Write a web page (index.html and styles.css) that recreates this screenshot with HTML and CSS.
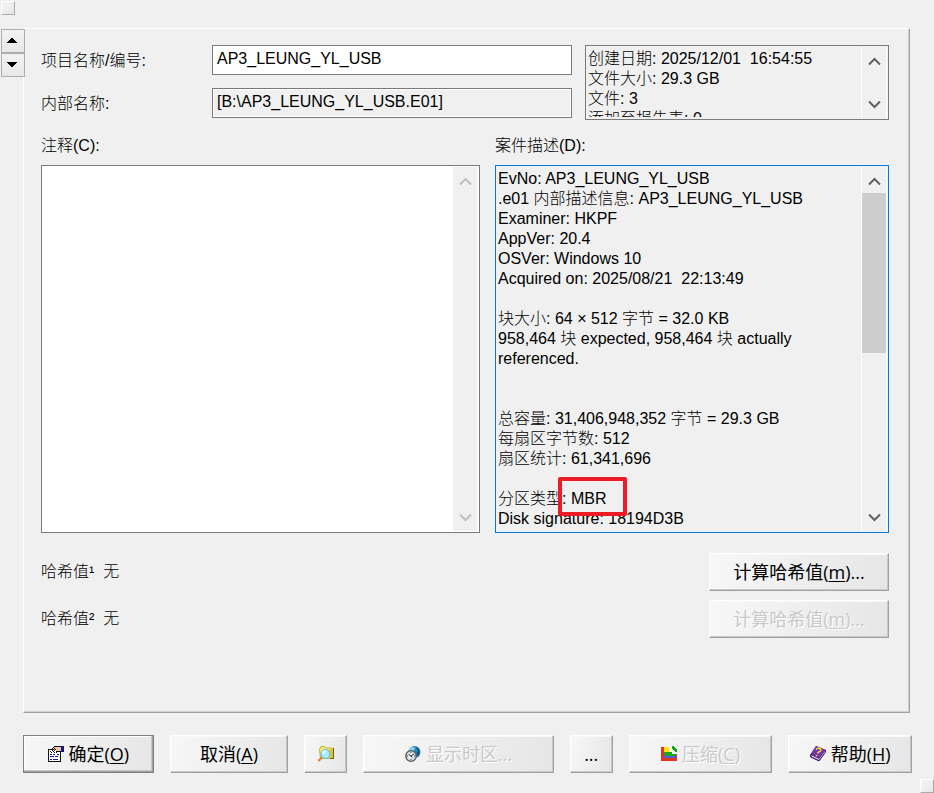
FILE: index.html
```html
<!DOCTYPE html>
<html lang="zh-CN">
<head>
<meta charset="utf-8">
<meta name="viewport" content="width=device-width, initial-scale=1">
<title>AP3_LEUNG_YL_USB</title>
<link rel="stylesheet" href="styles.css">
</head>
<body>
<form class="dialog">
  <span class="grip grip-start"></span>
  <div class="main">
    <div class="spinner">
      <button type="button" class="spin" aria-label="上一个"><svg width="10" height="5" viewBox="0 0 10 5" shape-rendering="crispEdges"><path d="M4 0h2v1h1v1h1v1h1v1h1v1H0V4h1V3h1V2h1V1h1z"/></svg></button>
      <button type="button" class="spin" aria-label="下一个"><svg width="10" height="5" viewBox="0 0 10 5" shape-rendering="crispEdges"><path d="M4 5h2V4h1V3h1V2h1V1h1V0H0v1h1v1h1v1h1v1h1z"/></svg></button>
    </div>
    <div class="panel">
      <div class="summary">
        <div class="fields">
          <label for="name">项目名称/编号:</label>
          <input id="name" class="field" type="text" value="AP3_LEUNG_YL_USB">
          <label for="internal">内部名称:</label>
          <input id="internal" class="field readonly" type="text" value="[B:\AP3_LEUNG_YL_USB.E01]" readonly>
        </div>
        <div class="box readonly">
          <textarea class="text" aria-label="属性" readonly>创建日期: 2025/12/01  16:54:55
文件大小: 29.3 GB
文件: 3
添加至报告表: 0</textarea>
          <div class="scroll">
            <svg class="arrow" width="13" height="9" viewBox="0 0 13 9"><path d="M1 7.500l5.500-5.500 5.500 5.500"/></svg>
            <svg class="arrow" width="13" height="9" viewBox="0 0 13 9"><path d="M1 1.500l5.500 5.500 5.500-5.500"/></svg>
          </div>
        </div>
      </div>
      <div class="notes">
        <div class="note">
          <label for="comment">注释(C):</label>
          <div class="box">
            <textarea id="comment" class="text"></textarea>
            <div class="scroll idle">
              <svg class="arrow" width="13" height="9" viewBox="0 0 13 9"><path d="M1 7.500l5.500-5.500 5.500 5.500"/></svg>
              <svg class="arrow" width="13" height="9" viewBox="0 0 13 9"><path d="M1 1.500l5.500 5.500 5.500-5.500"/></svg>
            </div>
          </div>
        </div>
        <div class="note">
          <label for="description">案件描述(D):</label>
          <div class="box readonly focused">
            <textarea id="description" class="text" readonly>EvNo: AP3_LEUNG_YL_USB
.e01 内部描述信息: AP3_LEUNG_YL_USB
Examiner: HKPF
AppVer: 20.4
OSVer: Windows 10
Acquired on: 2025/08/21  22:13:49

块大小: 64 × 512 字节 = 32.0 KB
958,464 块 expected, 958,464 块 actually referenced.


总容量: 31,406,948,352 字节 = 29.3 GB
每扇区字节数: 512
扇区统计: 61,341,696

分区类型: MBR
Disk signature: 18194D3B</textarea>
            <div class="scroll">
              <svg class="arrow" width="13" height="9" viewBox="0 0 13 9"><path d="M1 7.500l5.500-5.500 5.500 5.500"/></svg>
              <span class="thumb"></span>
              <svg class="arrow" width="13" height="9" viewBox="0 0 13 9"><path d="M1 1.500l5.500 5.500 5.500-5.500"/></svg>
            </div>
            <span class="mark"></span>
          </div>
        </div>
      </div>
      <div class="hashes">
        <div class="hash"><span>哈希值¹&nbsp; 无</span><button type="button" class="btn"><span>计算哈希值(<u>m</u>)...</span></button></div>
        <div class="hash"><span>哈希值²&nbsp; 无</span><button type="button" class="btn" disabled><span>计算哈希值(<u>m</u>)...</span></button></div>
      </div>
    </div>
  </div>
  <div class="actions">
    <button type="submit" class="btn default">
      <svg class="icon" viewBox="0 0 16 16" shape-rendering="crispEdges"><path fill="#111" d="M0 3h13v13H0z"/><path fill="#fff" d="M1 4h11v11H1z"/><path fill="#2018b0" d="M2 8h2v1H2zm3 0h2v1H5zm4 0h2v1H9zM2 10h4v1H2zm5 0h3v1H7zM2 13h2v1H2zm3 0h5v1H5z"/><path fill="#111" d="M6 0h7v1H6zM5 1h1v1H5zM4 2h1v1H4zM3 3h1v1H3zm1 1h1v1H4zm4 1h5v1H8zM2 5h1v1H2zm1 1h1v1H3zm2-1h1v1H5zm1 1h1v1H6zm2 0h1v1H8z"/><path fill="#edc9a8" d="M6 1h7v4H8V4H6V3H5V2h1z"/><path fill="#111" d="M6 2h1v1H6zm1 1h1v1H7zM5 3h1v1H5zm1 1h1v1H6z"/><path fill="#1b168a" d="M13 0h3v6h-3z"/></svg>
      <span>确定(<u>O</u>)</span>
    </button>
    <button type="button" class="btn"><span>取消(<u>A</u>)</span></button>
    <button type="button" class="btn" aria-label="浏览">
      <svg class="icon" viewBox="0 0 16 16"><path fill="#f3e779" stroke="#c8ad31" d="M1.500 3.500L3 .500h3.500L8 2h6l1.500 10.500h-13z"/><path fill="#ddc33b" d="M11 4l4-2v11h-4z"/><path fill="#6b5c28" d="M12 12h4v1h-4zM15 2h1v10h-1z"/><path stroke="#e77f1b" stroke-width="2" d="M4 11L.500 15"/><circle cx="7.500" cy="8" r="4.500" fill="#a9edfa" stroke="#54b9e6"/><path stroke="#effcff" stroke-width="2" fill="none" d="M5 8c0-2 1-3 3-3"/></svg>
    </button>
    <button type="button" class="btn" disabled>
      <svg class="icon" viewBox="0 0 16 16"><circle cx="9.500" cy="6" r="6" fill="#2386b7"/><path fill="#8dd0e8" d="M5 2c2-2 5-1 5 1L8 6 4 5z"/><path fill="#125983" d="M11 1c4 1 5 6 2 10l-2-3 2-3z"/><circle cx="6" cy="10" r="5.200" fill="#e5e8ea" stroke="#59636a" stroke-width="1.500"/><path fill="none" stroke="#333" d="M3.500 8.500L6 10l3-2M6 6v1M6 13v1M2 10h1M9 10h1M6 10l1.500 1.500"/></svg>
      <span>显示时区...</span>
    </button>
    <button type="button" class="btn">...</button>
    <button type="button" class="btn" disabled>
      <svg class="icon" viewBox="0 0 16 16" shape-rendering="crispEdges"><path fill="#e1341e" d="M0 1h3v10h13v4H0z"/><path fill="#ffe600" d="M3 1h5v5H3z"/><path fill="#13a913" d="M3 6h8v2h3v2H3z"/><path fill="#4a64dd" d="M3 9h11v3H3z"/><path fill="#13a913" d="M5 8h9v2H5zM11 0h2v1h1v1h1v1h1v3h-2V5h-1V4h-1V3h-1z"/><path fill="#9b4597" d="M14 8h2v4h-2z"/></svg>
      <span>压缩(<u>C</u>)</span>
    </button>
    <button type="button" class="btn">
      <svg class="icon" viewBox="0 0 16 16"><path fill="#4b1776" d="M0 9L6 0l10 4v2L9 15 0 11z"/><path fill="#7535ae" d="M1 8L6 0l9 4-6 8z"/><path fill="#eee" d="M1 9l8 4 6-8v1.500L9 14l-8-3.500z"/><path fill="none" stroke="#4b1776" d="M1 11l8 4 6-8.500M1 8v3"/><path fill="none" stroke="#f6e31f" stroke-width="1.500" d="M6 3.500C8 1 12 3 10.500 5 9.500 6 8 5.500 7.500 7.500M6.500 9v1.200"/></svg>
      <span>帮助(<u>H</u>)</span>
    </button>
  </div>
  <span class="grip grip-end"></span>
</form>
</body>
</html>
```
FILE: styles.css
```css
* {
  box-sizing: border-box;
}

body {
  margin: 0;
  background: #f0f0f0;
  color: #000;
  font: 300 16px/20px "Liberation Sans", "Noto Sans CJK SC", sans-serif;
}

.dialog {
  position: relative;
  display: flex;
  flex-direction: column;
  gap: 22px;
  min-height: 100vh;
  padding: 28px 0 20px;
}

.grip {
  position: absolute;
  width: 14px;
  height: 14px;
  border: 1px solid;
  border-color: #fff #aaa #aaa #fff;
  background: linear-gradient(135deg, #f6f6f6, #e6e6e6);
}

.grip-start {
  top: 1px;
  left: 1px;
}

.grip-end {
  right: 0;
  bottom: 0;
}

.main {
  flex: 1;
  display: grid;
  grid-template-columns: 23px 1fr;
  padding-right: 24px;
}

.spinner {
  display: flex;
  flex-direction: column;
  width: 24px;
  padding: 1px 0 0 1px;
  z-index: 1;
}

.spin {
  display: grid;
  place-items: center;
  width: 24px;
  height: 24px;
  padding: 0 2px 2px 0;
  border: 1px solid #adadad;
  background: linear-gradient(#f2f2f2, #e8e8e8);
}

.panel {
  display: flex;
  flex-direction: column;
  padding: 16px 20px 74px 17px;
  border: 1px solid;
  border-color: #fff #a0a0a0 #a0a0a0 #fff;
  box-shadow: inset -1px -1px #d0d0d0;
}

.summary {
  display: grid;
  grid-template-columns: 531fr 304fr;
  gap: 13px;
  height: 75px;
}

.fields {
  display: grid;
  grid-template-columns: 171px 1fr;
  grid-auto-rows: 30px;
  row-gap: 13px;
  align-items: center;
}

.fields label {
  padding-top: 2px;
}

.field {
  width: 100%;
  height: 30px;
  padding: 0 4px 2px;
  border: 1px solid #7a7a7a;
  background: #fff;
  font: inherit;
}

.readonly {
  background: #f0f0f0;
}

.field.readonly {
  box-shadow: inset 0 0 0 1px #fff;
}

.notes {
  flex: 1;
  display: grid;
  grid-template-columns: 439fr 394fr;
  gap: 15px;
  padding-top: 16px;
}

.note {
  display: flex;
  flex-direction: column;
  gap: 9px;
}

.note .box {
  flex: 1;
}

.box {
  position: relative;
  display: flex;
  min-height: 0;
  border: 1px solid #7a7a7a;
}

.box:not(.readonly) {
  background: #fff;
}

.focused {
  border-color: #0078d7;
}

.text {
  flex: 1;
  min-width: 0;
  margin: 3px 0 2px;
  padding: 0 2px;
  border: 0;
  outline: 0;
  resize: none;
  overflow: hidden;
  background: transparent;
  font: inherit;
}

.scroll {
  flex: none;
  display: flex;
  flex-direction: column;
  justify-content: space-between;
  width: 26px;
  margin: 1px;
  padding: 10px 0 9px;
  border: solid #fff;
  border-width: 0 1px;
  background: #f0f0f0;
}

.arrow {
  display: block;
  margin: 0 auto;
  fill: none;
  stroke: #606060;
  stroke-width: 2;
}

.idle .arrow {
  stroke: #bfbfbf;
}

.thumb {
  height: 160px;
  margin: 7px 0 auto;
  background: #cdcdcd;
}

.mark {
  position: absolute;
  top: 311px;
  left: 62px;
  width: 69px;
  height: 39px;
  border: 4px solid #ed1c24;
  border-radius: 2px;
}

.hashes {
  display: flex;
  flex-direction: column;
  gap: 9px;
  padding-top: 20px;
}

.hash {
  display: flex;
  justify-content: space-between;
  align-items: center;
}

.hash .btn {
  width: 180px;
}

.btn {
  display: flex;
  align-items: center;
  justify-content: center;
  gap: 5px;
  min-width: 0;
  height: 38px;
  padding: 0;
  border: 1px solid;
  border-color: #fff #a0a0a0 #a0a0a0 #fff;
  box-shadow: inset -1px -1px #c8c8c8, inset 1px 1px #f8f8f8;
  background: linear-gradient(100deg, #f7f7f7, #e6e6e6);
  color: #000;
  font: 300 18px/24px "Open Sans", "Noto Sans CJK SC", sans-serif;
  font-weight: 400;
  white-space: nowrap;
}

.btn:disabled {
  color: #c9c9c9;
  text-shadow: 1px 1px #fff;
}

.btn u {
  text-underline-offset: 2px;
}

.default {
  border-color: #808080;
  box-shadow: inset -1px -1px #a0a0a0, inset -2px -2px #c8c8c8, inset 1px 1px #fff;
}

.icon {
  flex: none;
  width: 16px;
  height: 16px;
}

.actions {
  display: grid;
  grid-template-columns: 131fr 119fr 43fr 191fr 43fr 144fr 124fr;
  gap: 16px;
  padding: 0 22px 0 23px;
}
```
